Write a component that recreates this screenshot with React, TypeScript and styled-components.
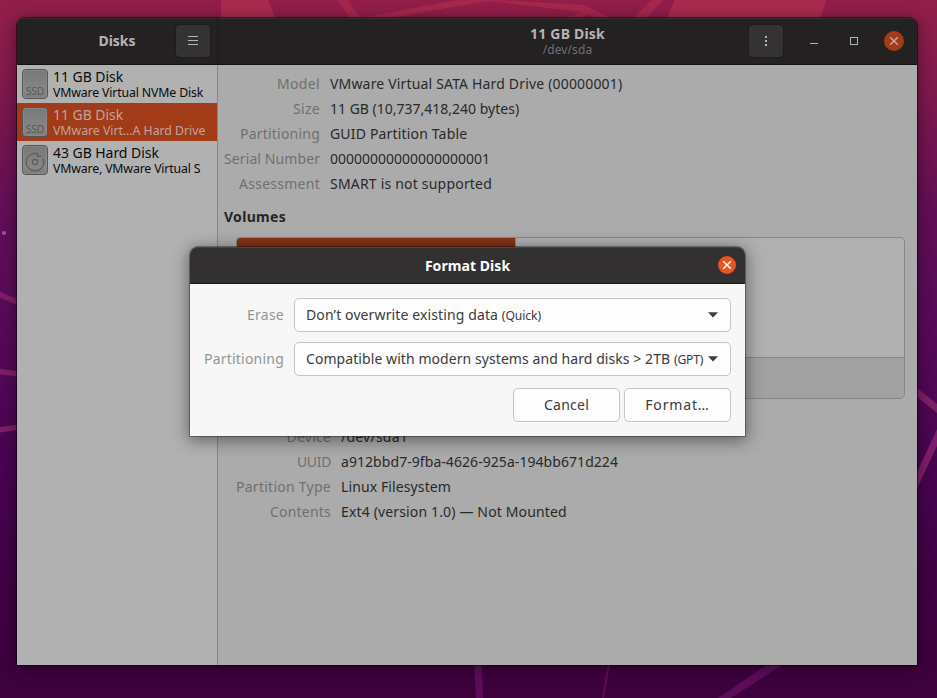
import React from 'react';
import styled, { createGlobalStyle } from 'styled-components';

const GlobalStyle = createGlobalStyle`
  * { box-sizing: border-box; }
  body {
    margin: 0;
    overflow: hidden;
    font: 14px/20px "Noto Sans", "Open Sans", sans-serif;
  }
`;

const Desktop = styled.div`
  position: relative;
  width: 937px;
  height: 698px;
  padding: 18px 20px 33px 17px;
  overflow: hidden;
  background: linear-gradient(180deg, #921e48 0, #851b4b 60px, #75154f 130px, #620e56 210px, #580b57 300px, #500755 390px, #470450 470px, #400243 580px, #3d013c 698px);
`;

const Wallpaper = styled.svg`
  position: absolute;
  inset: 0;
`;

const AppWindow = styled.main`
  position: relative;
  display: grid;
  grid-template: 47px 1fr / 201px 1fr;
  width: 900px;
  height: 647px;
  overflow: hidden;
  border-radius: 8px 8px 0 0;
`;

const WindowShadow = styled.div`
  position: relative;
  width: 900px;
  border-radius: 8px 8px 0 0;
  box-shadow: 0 0 0 1px rgba(10, 0, 10, 0.55), 0 2px 14px 1px rgba(0, 0, 0, 0.42);
`;

const HeaderSection = styled.header<{ $divided?: boolean }>`
  display: grid;
  grid-template-columns: 1fr auto 1fr;
  align-items: center;
  background: #242122;
  border-bottom: 1px solid #121112;
  border-right: ${(p) => (p.$divided ? '1px solid #1b191a' : 'none')};
  box-shadow: inset 0 1px #333132;
`;

const Titles = styled.div`
  grid-column: 2;
  text-align: center;
`;

const Title = styled.div<{ $color: string; $track?: number }>`
  color: ${(p) => p.$color};
  font-weight: 700;
  line-height: 18px;
  letter-spacing: ${(p) => p.$track ?? 0}px;
`;

const Subtitle = styled.div`
  color: #726f76;
  font-size: 12px;
  line-height: 14px;
  letter-spacing: 0.1px;
`;

const HeaderActions = styled.div<{ $end: number }>`
  display: flex;
  align-items: center;
  justify-content: flex-end;
  padding-right: ${(p) => p.$end}px;
`;

const HeaderButton = styled.button`
  display: grid;
  place-items: center;
  width: 34px;
  height: 32px;
  padding: 0;
  background: #343233;
  border: 0;
  border-radius: 4px;
  box-shadow: 0 0 0 1px #1d1b1c;
`;

const WindowButtons = styled.div`
  display: flex;
  gap: 20px;
  margin-left: 21px;
`;

const WindowButton = styled.button`
  display: grid;
  place-items: center;
  width: 20px;
  height: 20px;
  padding: 0;
  background: none;
  border: 0;
`;

const CloseButton = styled(WindowButton)<{ $size: number; $bg: string }>`
  width: ${(p) => p.$size}px;
  height: ${(p) => p.$size}px;
  background: ${(p) => p.$bg};
  border-radius: 50%;
`;

const Sidebar = styled.nav`
  background: #b1b1b1;
  border-right: 1px solid #868686;
`;

const DriveRow = styled.div<{ $selected?: boolean }>`
  display: flex;
  gap: 5px;
  height: 38px;
  padding: 4px 5px;
  color: ${(p) => (p.$selected ? '#bda59c' : '#0b0b0b')};
  background: ${(p) => (p.$selected ? '#a13b18' : 'transparent')};
`;

const DriveText = styled.div`
  white-space: nowrap;
`;

const DriveName = styled.div`
  line-height: 16px;
  letter-spacing: -0.05px;
`;

const DriveModel = styled.div<{ $track: number }>`
  font-size: 12.33px;
  line-height: 15px;
  letter-spacing: ${(p) => p.$track}px;
`;

const Content = styled.section`
  display: flex;
  flex-direction: column;
  padding: 6px 12px 0 6px;
  background: #ababab;
`;

const Details = styled.dl<{ $labels: number; $indent?: number }>`
  display: grid;
  grid-template-columns: ${(p) => p.$labels}px 1fr;
  grid-auto-rows: 25px;
  column-gap: 10px;
  align-items: center;
  margin: 0;
  padding-left: ${(p) => p.$indent ?? 0}px;
  white-space: nowrap;
`;

const Term = styled.dt<{ $track: number }>`
  color: #707070;
  text-align: right;
  letter-spacing: ${(p) => p.$track}px;
`;

const Value = styled.dd<{ $track: number }>`
  margin: 0;
  color: #292929;
  letter-spacing: ${(p) => p.$track}px;
`;

const SectionTitle = styled.h2`
  margin: 11px 0 10px;
  color: #262626;
  font-size: 14px;
  font-weight: 700;
  line-height: 20px;
  letter-spacing: 0.3px;
`;

const Volumes = styled.div`
  display: flex;
  flex-direction: column;
  height: 162px;
  margin: 0 0 25px 12px;
  overflow: hidden;
  background: #b0b0b0;
  border: 1px solid #868686;
  border-radius: 4px 4px 5px 5px;
`;

const VolumeMap = styled.div`
  display: flex;
  flex: 1;
`;

const Partition = styled.div`
  width: 279px;
  background: linear-gradient(#8b3417, #7a2c12 12px);
  border-right: 1px solid #868686;
`;

const VolumeToolbar = styled.div`
  height: 41px;
  background: #a1a1a1;
  border-top: 1px solid #868686;
`;

const Dialog = styled.div`
  position: absolute;
  left: 190px;
  top: 247px;
  width: 555px;
  height: 189px;
  background: #f7f7f7;
  border-radius: 8px 8px 0 0;
  box-shadow: 0 0 0 1px rgba(0, 0, 0, 0.32), 0 3px 16px 2px rgba(0, 0, 0, 0.42);
`;

const DialogHeader = styled.header`
  display: grid;
  grid-template-columns: 1fr auto 1fr;
  align-items: center;
  height: 37px;
  padding-right: 9px;
  padding-left: 9px;
  background: #333031;
  border-bottom: 1px solid #191718;
  border-radius: 8px 8px 0 0;
  box-shadow: inset 0 1px #474445;
`;

const DialogTitles = styled(Titles)`
  padding-top: 2px;
`;

const DialogClose = styled.div`
  display: flex;
  justify-content: flex-end;
`;

const Form = styled.div`
  display: grid;
  grid-template-columns: 80px 437px;
  grid-auto-rows: 34px;
  gap: 10px;
  align-items: center;
  padding: 14px;
`;

const FieldLabel = styled.label<{ $track: number }>`
  color: #939595;
  text-align: right;
  letter-spacing: ${(p) => p.$track}px;
`;

const Control = styled.button<{ $track: number }>`
  height: 34px;
  color: #3b3b3b;
  background: #fdfdfd;
  border: 1px solid #c4c4c4;
  border-radius: 5px;
  font: inherit;
  letter-spacing: ${(p) => p.$track}px;
  white-space: nowrap;
`;

const Select = styled(Control)`
  display: flex;
  align-items: center;
  justify-content: space-between;
  padding: 0 12px 0 11px;
  text-align: left;
`;

const Hint = styled.span<{ $track: number }>`
  font-size: 12.2px;
  letter-spacing: ${(p) => p.$track}px;
`;

const ActionButton = styled(Control)`
  width: 107px;
  padding: 0;
`;

const Actions = styled.div`
  display: flex;
  grid-column: 1 / -1;
  gap: 4px;
  justify-content: flex-end;
  margin-top: 4px;
`;

const CrossIcon = ({ color }: { color: string }) => (
  <svg width="10" height="10" viewBox="0 0 10 10">
    <path d="M1.2 1.2 8.8 8.8M8.8 1.2 1.2 8.8" stroke={color} strokeWidth="1.35" />
  </svg>
);

const DriveIcon = ({ kind }: { kind: 'ssd' | 'hdd' }) => (
  <svg width="26" height="30" viewBox="0 0 26 30">
    <defs>
      <linearGradient id="case" x2="0" y2="1">
        <stop offset="0" stopColor="#787878" />
        <stop offset="0.75" stopColor="#868686" />
        <stop offset="1" stopColor="#7c7c7c" />
      </linearGradient>
    </defs>
    <rect x="0.5" y="0.5" width="25" height="29" rx="3.5" fill="url(#case)" stroke="#555" />
    <rect x="1.5" y="1.5" width="23" height="27" rx="2.5" fill="none" stroke="#919191" strokeOpacity="0.6" />
    {kind === 'ssd' ? (
      <text x="13" y="25.7" fill="#585858" fontFamily="Noto Sans" fontSize="10.4" textAnchor="middle" textLength="18.6">SSD</text>
    ) : (
      <g fill="none" stroke="#5a5a5a" strokeWidth="1.1">
        <path d="M15.6 8.6A8.8 8.8 0 1 0 21.2 13.6M15.6 8.6V11.2H19.4" />
        <circle cx="13" cy="17" r="2.6" />
      </g>
    )}
  </svg>
);

const CaretIcon = () => (
  <svg width="10" height="6" viewBox="0 0 10 6">
    <path d="M0 0.3H10L5 5.5Z" fill="#3b3b3b" />
  </svg>
);

const drives = [
  { name: '11 GB Disk', model: 'VMware Virtual NVMe Disk', kind: 'ssd' as const, track: -0.16 },
  { name: '11 GB Disk', model: 'VMware Virt…A Hard Drive', kind: 'ssd' as const, track: -0.04, selected: true },
  { name: '43 GB Hard Disk', model: 'VMware, VMware Virtual S', kind: 'hdd' as const, track: -0.17 },
];

type Detail = [label: string, labelTrack: number, value: string, valueTrack: number];

const diskDetails: Detail[] = [
  ['Model', 0.34, 'VMware Virtual SATA Hard Drive (00000001)', 0.17],
  ['Size', 0.31, '11 GB (10,737,418,240 bytes)', 0],
  ['Partitioning', 0.21, 'GUID Partition Table', 0.17],
  ['Serial Number', 0.1, '00000000000000000001', -0.01],
  ['Assessment', 0.26, 'SMART is not supported', 0.2],
];

const volumeDetails: Detail[] = [
  ['Device', 0.2, '/dev/sda1', 0.23],
  ['UUID', -0.36, 'a912bbd7-9fba-4626-925a-194bb671d224', 0.06],
  ['Partition Type', 0.26, 'Linux Filesystem', 0.11],
  ['Contents', 0.21, 'Ext4 (version 1.0) — Not Mounted', 0.15],
];

const DetailRows = ({ rows }: { rows: Detail[] }) => (
  <>
    {rows.map(([label, labelTrack, value, valueTrack]) => (
      <React.Fragment key={label}>
        <Term $track={labelTrack}>{label}</Term>
        <Value $track={valueTrack}>{value}</Value>
      </React.Fragment>
    ))}
  </>
);

export default function App() {
  return (
    <Desktop>
      <GlobalStyle />
      <Wallpaper width="937" height="698">
        <g fill="#a92a4e">
          <path d="M221 0H268L277 22H221Z" />
          <path d="M337 0H348L363 22H353Z" opacity="0.8" />
          <path d="M361 18 457 0H500L585 5 610 18H597L581 12 488 1 390 18Z" opacity="0.8" />
          <path d="M566 18 582 12 588 14 580 18Z" opacity="0.8" />
          <path d="M633 18 652 0H663L647 18Z" opacity="0.8" />
          <path d="M667 18 675 0H826L821 18Z" />
        </g>
        <g stroke="#7d1f64" strokeWidth="5.5" fill="none">
          <path d="M-2 294 20 303M-2 371.5 20 374M-2 430 20 427" />
          <path d="M914 390 940 411M940 431 914 487" strokeWidth="7" />
        </g>
        <g fill="#5c0c59">
          <path d="M474 664H482L483 698H476Z" />
          <path d="M608 664H610L604 698H602Z" />
          <path d="M768 664H784L731 698H718Z" />
        </g>
        <circle cx="4" cy="233" r="2.1" fill="#a0569a" />
      </Wallpaper>

      <WindowShadow>
        <AppWindow>
          <HeaderSection $divided>
            <Titles>
              <Title $color="#b5b4b4">Disks</Title>
            </Titles>
            <HeaderActions $end={7}>
              <HeaderButton aria-label="Menu">
                <svg width="10" height="10" viewBox="0 0 10 10">
                  <path d="M0 .5H10M0 4.5H10M0 8.5H10" stroke="#b5b4b4" />
                </svg>
              </HeaderButton>
            </HeaderActions>
          </HeaderSection>

          <HeaderSection>
            <Titles>
              <Title $color="#b5b4b4" $track={0.2}>11 GB Disk</Title>
              <Subtitle>/dev/sda</Subtitle>
            </Titles>
            <HeaderActions $end={13}>
              <HeaderButton aria-label="Drive options">
                <svg width="2" height="10" viewBox="0 0 2 10">
                  <path d="M0 0H2V2H0ZM0 4H2V6H0ZM0 8H2V10H0Z" fill="#b5b4b4" />
                </svg>
              </HeaderButton>
              <WindowButtons>
                <WindowButton aria-label="Minimize">
                  <svg width="8" height="8" viewBox="0 0 8 8">
                    <path d="M0 6.5H8" stroke="#b5b4b4" />
                  </svg>
                </WindowButton>
                <WindowButton aria-label="Maximize">
                  <svg width="8" height="8" viewBox="0 0 8 8">
                    <rect x="0.5" y="0.5" width="7" height="7" fill="none" stroke="#b5b4b4" />
                  </svg>
                </WindowButton>
                <CloseButton $size={20} $bg="#a33b18" aria-label="Close">
                  <CrossIcon color="#bfb0aa" />
                </CloseButton>
              </WindowButtons>
            </HeaderActions>
          </HeaderSection>

          <Sidebar>
            {drives.map((d) => (
              <DriveRow key={d.model} $selected={d.selected}>
                <DriveIcon kind={d.kind} />
                <DriveText>
                  <DriveName>{d.name}</DriveName>
                  <DriveModel $track={d.track}>{d.model}</DriveModel>
                </DriveText>
              </DriveRow>
            ))}
          </Sidebar>

          <Content>
            <Details $labels={96}>
              <DetailRows rows={diskDetails} />
            </Details>
            <SectionTitle>Volumes</SectionTitle>
            <Volumes>
              <VolumeMap>
                <Partition />
              </VolumeMap>
              <VolumeToolbar />
            </Volumes>
            <Details $labels={95} $indent={12}>
              <DetailRows rows={volumeDetails} />
            </Details>
          </Content>
        </AppWindow>
      </WindowShadow>

      <Dialog role="dialog" aria-label="Format Disk">
        <DialogHeader>
          <DialogTitles>
            <Title $color="#ffffff" $track={0.06}>Format Disk</Title>
          </DialogTitles>
          <DialogClose>
            <CloseButton $size={18} $bg="#e95420" aria-label="Close dialog">
              <CrossIcon color="#ffffff" />
            </CloseButton>
          </DialogClose>
        </DialogHeader>
        <Form>
          <FieldLabel $track={0.25}>Erase</FieldLabel>
          <Select $track={0.12}>
            <span>Don’t overwrite existing data <Hint $track={-0.1}>(Quick)</Hint></span>
            <CaretIcon />
          </Select>
          <FieldLabel $track={0.21}>Partitioning</FieldLabel>
          <Select $track={0.07}>
            <span>Compatible with modern systems and hard disks &gt; 2TB <Hint $track={-0.2}>(GPT)</Hint></span>
            <CaretIcon />
          </Select>
          <Actions>
            <ActionButton $track={0.24}>Cancel</ActionButton>
            <ActionButton $track={0.85}>Format…</ActionButton>
          </Actions>
        </Form>
      </Dialog>
    </Desktop>
  );
}
